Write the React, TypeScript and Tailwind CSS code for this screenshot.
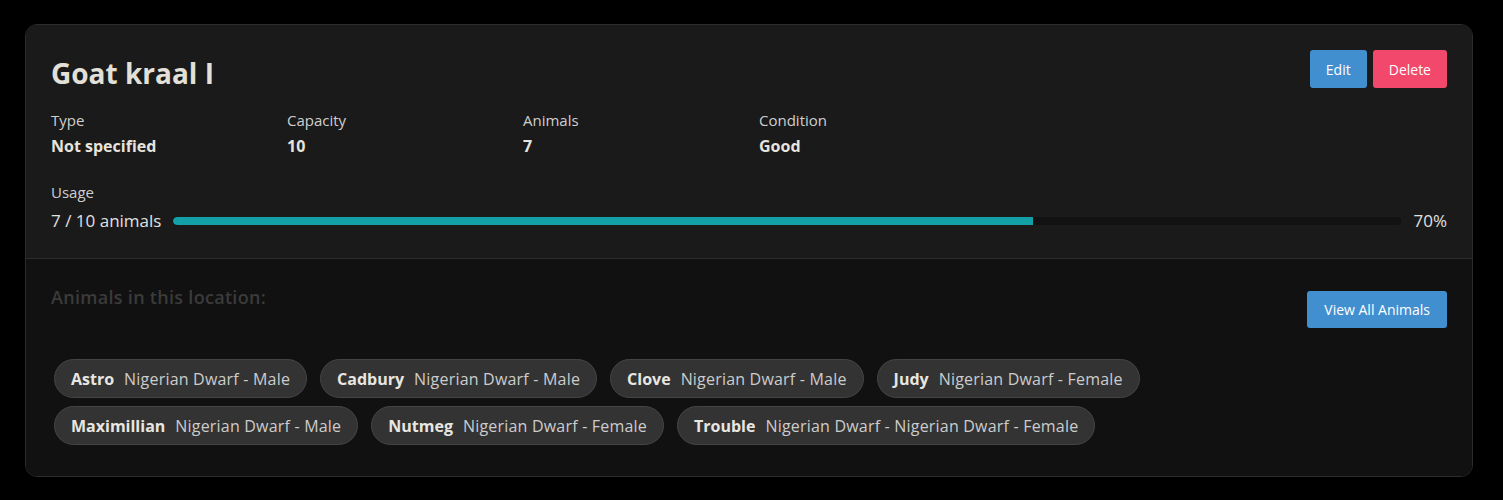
import React from 'react';

type Animal = { name: string; breed: string };

const animals: Animal[] = [
  { name: 'Astro', breed: 'Nigerian Dwarf - Male' },
  { name: 'Cadbury', breed: 'Nigerian Dwarf - Male' },
  { name: 'Clove', breed: 'Nigerian Dwarf - Male' },
  { name: 'Judy', breed: 'Nigerian Dwarf - Female' },
  { name: 'Maximillian', breed: 'Nigerian Dwarf - Male' },
  { name: 'Nutmeg', breed: 'Nigerian Dwarf - Female' },
  { name: 'Trouble', breed: 'Nigerian Dwarf - Nigerian Dwarf - Female' },
];

const stats = [
  { label: 'Type', value: 'Not specified' },
  { label: 'Capacity', value: '10' },
  { label: 'Animals', value: '7' },
  { label: 'Condition', value: 'Good' },
];

const App: React.FC = () => {
  const used = 7;
  const capacity = 10;
  const pct = Math.round((used / capacity) * 100);

  return (
    <div className="min-h-[500px] bg-black pt-[24px] pl-[25px] pr-[30px] font-['Open_Sans',sans-serif]">
      <div className="border border-[#2c2c2c] rounded-xl overflow-hidden">
        {/* location details */}
        <div className="bg-[#1a1a1a] px-[25px] pt-[25px] pb-[26px] border-b border-[#2c2c2c]">
          <div className="flex justify-between items-start">
            <h2 className="text-[28px] leading-[34px] font-bold text-[#e2e0d8] mt-[6px]">Goat kraal I</h2>
            <div className="flex gap-[6px]">
              <button className="bg-[#428fd0] text-white text-[14px] h-[38px] px-4 rounded-[3px]">Edit</button>
              <button className="bg-[#f2486b] text-white text-[14px] h-[38px] px-4 rounded-[3px]">Delete</button>
            </div>
          </div>

          <div className="grid grid-cols-[236px_236px_236px_236px] mt-[20px]">
            {stats.map((s) => (
              <div key={s.label}>
                <div className="text-[15px] leading-[20px] text-[#cfcfcf]">{s.label}</div>
                <div className="text-[16px] leading-[22px] font-bold text-[#e6e4de] mt-[5px]">{s.value}</div>
              </div>
            ))}
          </div>

          <div className="mt-[25px]">
            <div className="text-[15px] leading-[20px] text-[#cfcfcf]">Usage</div>
            <div className="flex items-center gap-3 mt-[8px]">
              <span className="text-[17px] leading-[22px] text-[#e0e0e0] whitespace-nowrap">
                {used} / {capacity} animals
              </span>
              <div className="flex-1 h-[8px] bg-[#121212] rounded-full overflow-hidden">
                <div className="h-full bg-[#13a0a6] rounded-l-full" style={{ width: `${pct}%` }} />
              </div>
              <span className="text-[17px] leading-[22px] text-[#e0e0e0]">{pct}%</span>
            </div>
          </div>
        </div>

        {/* animals list */}
        <div className="bg-[#111111] px-[25px] pt-[26px] pb-[31px]">
          <div className="flex justify-between items-start">
            <h3 className="text-[18px] leading-[24px] font-semibold tracking-[0.3px] text-[#3b3b3b]">
              Animals in this location:
            </h3>
            <button className="bg-[#428fd0] text-white text-[14px] h-[37px] px-[17px] rounded-[3px] mt-[6px]">
              View All Animals
            </button>
          </div>

          <div className="flex flex-wrap gap-x-[13px] gap-y-[8px] mt-[31px] pl-[3px] pr-[4px]">
            {animals.map((a) => (
              <div
                key={a.name}
                className="flex items-center gap-[10px] h-[39px] px-[16px] rounded-full bg-[#333333] border border-[#454545] text-[16px]"
              >
                <span className="font-bold text-[#e8e6e0]">{a.name}</span>
                <span className="text-[#cccccc] tracking-[0.2px]">{a.breed}</span>
              </div>
            ))}
          </div>
        </div>
      </div>
    </div>
  );
};

export default App;
